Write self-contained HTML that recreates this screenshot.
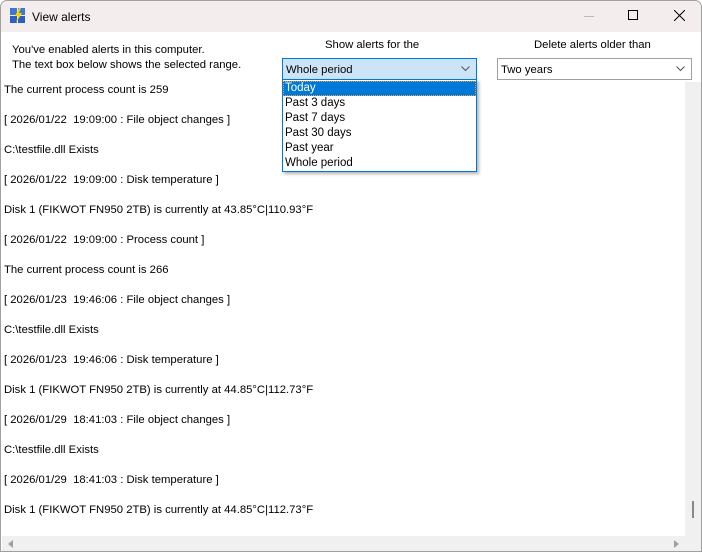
<!DOCTYPE html>
<html><head><style>
*{margin:0;padding:0;box-sizing:border-box}
body{width:702px;height:552px;overflow:hidden;background:#fff;font-family:"Liberation Sans",sans-serif;font-size:11.3px;color:#000;position:relative}
.win{position:absolute;left:0;top:0;width:702px;height:552px;border:1px solid #a0a0a0;border-radius:7px 7px 0 0;overflow:hidden;background:#fff}
.title{position:absolute;left:0;top:0;width:700px;height:31px;background:#f4eded}
.abs{position:absolute;white-space:nowrap}
.combo{position:absolute;height:22px;border:1px solid #a0a0a0;padding:5px 0 0 3px;background:#fff}
.line{position:absolute;left:3px;white-space:nowrap}
.chev{position:absolute;left:178px;top:7px}
.dl div{height:15px;line-height:15px;padding-left:2px}
</style></head><body><div class="win">
<div class="title">
<svg class="abs" style="left:9px;top:7px" width="16" height="16"><rect x="0" y="0" width="7" height="7" fill="#3a78d8"/><rect x="8" y="0" width="7" height="7" fill="#3a78d8"/><rect x="0" y="8" width="7" height="7" fill="#2c5fc0"/><rect x="8" y="8" width="7" height="7" fill="#2c5fc0"/><path d="M9 0 L5 8 L8 8 L6 15 L12 5 L9 5 L11 0Z" fill="#f5d000"/></svg>
<div class="abs" style="left:31px;top:9px;font-size:12px">View alerts</div>
<div class="abs" style="left:583px;top:15px;width:10px;height:1px;background:#bbb"></div>
<div class="abs" style="left:627px;top:9px;width:10px;height:10px;border:1px solid #000"></div>
<svg class="abs" style="left:673px;top:9px" width="11" height="11"><path d="M0 0L11 11M11 0L0 11" stroke="#000" stroke-width="1"/></svg>
</div>
<div class="abs" style="left:11px;top:43px">You've enabled alerts in this computer.</div>
<div class="abs" style="left:11px;top:58px">The text box below shows the selected range.</div>
<div class="abs" style="left:324px;top:38px">Show alerts for the</div>
<div class="abs" style="left:533px;top:38px">Delete alerts older than</div>
<div class="combo" style="left:281px;top:57px;width:195px;background:#cce4f7;border-color:#0078d7">Whole period<svg class="chev" width="9" height="6"><path d="M0.5 0.5L4.5 4.5L8.5 0.5" stroke="#555" fill="none"/></svg></div>
<div class="combo" style="left:496px;top:57px;width:195px">Two years<svg class="chev" width="9" height="6"><path d="M0.5 0.5L4.5 4.5L8.5 0.5" stroke="#555" fill="none"/></svg></div>
<div class="abs" style="left:684px;top:81px;width:17px;height:454px;background:#f0f0f0"></div>
<div class="abs" style="left:691px;top:500px;width:2px;height:17px;background:#888"></div>
<div class="abs" style="left:1px;top:535px;width:700px;height:16px;background:#f0f0f0"></div>
<div class="abs" style="left:7px;top:539px;width:0;height:0;border-top:4px solid transparent;border-bottom:4px solid transparent;border-right:5px solid #a0a0a0"></div>
<div class="abs" style="left:673px;top:539px;width:0;height:0;border-top:4px solid transparent;border-bottom:4px solid transparent;border-left:5px solid #a0a0a0"></div>
<div class="line" style="top:83px">The current process count is 259</div>
<div class="line" style="top:113px">[ 2026/01/22&nbsp; 19:09:00 : File object changes ]</div>
<div class="line" style="top:143px">C:\testfile.dll Exists</div>
<div class="line" style="top:173px">[ 2026/01/22&nbsp; 19:09:00 : Disk temperature ]</div>
<div class="line" style="top:203px">Disk 1 (FIKWOT FN950 2TB) is currently at 43.85°C|110.93°F</div>
<div class="line" style="top:233px">[ 2026/01/22&nbsp; 19:09:00 : Process count ]</div>
<div class="line" style="top:263px">The current process count is 266</div>
<div class="line" style="top:293px">[ 2026/01/23&nbsp; 19:46:06 : File object changes ]</div>
<div class="line" style="top:323px">C:\testfile.dll Exists</div>
<div class="line" style="top:353px">[ 2026/01/23&nbsp; 19:46:06 : Disk temperature ]</div>
<div class="line" style="top:383px">Disk 1 (FIKWOT FN950 2TB) is currently at 44.85°C|112.73°F</div>
<div class="line" style="top:413px">[ 2026/01/29&nbsp; 18:41:03 : File object changes ]</div>
<div class="line" style="top:443px">C:\testfile.dll Exists</div>
<div class="line" style="top:473px">[ 2026/01/29&nbsp; 18:41:03 : Disk temperature ]</div>
<div class="line" style="top:503px">Disk 1 (FIKWOT FN950 2TB) is currently at 44.85°C|112.73°F</div>
<div class="abs dl" style="left:281px;top:78px;width:195px;height:93px;border:1px solid #0078d7;background:#fff;box-shadow:2px 2px 3px rgba(0,0,0,.3);font-size:11.5px;padding-top:1px">
<div style="background:#0078d7;color:#fff;outline:1px dotted #f0a040;outline-offset:-1px">Today</div>
<div>Past 3 days</div>
<div>Past 7 days</div>
<div>Past 30 days</div>
<div>Past year</div>
<div>Whole period</div>
</div>
</div></body></html>
